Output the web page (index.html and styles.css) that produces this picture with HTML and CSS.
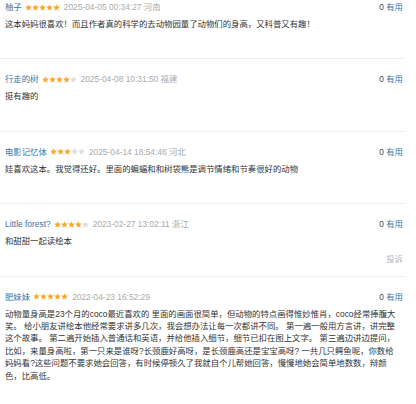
FILE: index.html
```html
<!DOCTYPE html>
<html lang="zh">
<head>
<meta charset="utf-8">
<link rel="stylesheet" href="styles.css">
</head>
<body>
<div class="list">
  <div class="item first">
    <div class="head">
      <span class="name">柚子</span>
      <svg class="stars" viewBox="0 0 35 7"><g class="on"><polygon points="3.5,0.2 4.5,2.5 6.9,2.6 5,4.2 5.7,6.7 3.5,5.3 1.3,6.7 2,4.2 0.1,2.6 2.5,2.5"/><polygon transform="translate(7 0)" points="3.5,0.2 4.5,2.5 6.9,2.6 5,4.2 5.7,6.7 3.5,5.3 1.3,6.7 2,4.2 0.1,2.6 2.5,2.5"/><polygon transform="translate(14 0)" points="3.5,0.2 4.5,2.5 6.9,2.6 5,4.2 5.7,6.7 3.5,5.3 1.3,6.7 2,4.2 0.1,2.6 2.5,2.5"/><polygon transform="translate(21 0)" points="3.5,0.2 4.5,2.5 6.9,2.6 5,4.2 5.7,6.7 3.5,5.3 1.3,6.7 2,4.2 0.1,2.6 2.5,2.5"/><polygon transform="translate(28 0)" points="3.5,0.2 4.5,2.5 6.9,2.6 5,4.2 5.7,6.7 3.5,5.3 1.3,6.7 2,4.2 0.1,2.6 2.5,2.5"/></g></svg>
      <span class="time">2025-04-05 00:34:27 河南</span>
      <span class="vote"><span class="count">0</span> <span class="useful">有用</span></span>
    </div>
    <p class="text">这本妈妈很喜欢！而且作者真的科学的去动物园量了动物们的身高，又科普又有趣！</p>
    <div class="actions"><span class="report hidden">投诉</span></div>
  </div>

  <div class="item">
    <div class="head">
      <span class="name">行走的树</span>
      <svg class="stars" viewBox="0 0 35 7"><g class="on"><polygon points="3.5,0.2 4.5,2.5 6.9,2.6 5,4.2 5.7,6.7 3.5,5.3 1.3,6.7 2,4.2 0.1,2.6 2.5,2.5"/><polygon transform="translate(7 0)" points="3.5,0.2 4.5,2.5 6.9,2.6 5,4.2 5.7,6.7 3.5,5.3 1.3,6.7 2,4.2 0.1,2.6 2.5,2.5"/><polygon transform="translate(14 0)" points="3.5,0.2 4.5,2.5 6.9,2.6 5,4.2 5.7,6.7 3.5,5.3 1.3,6.7 2,4.2 0.1,2.6 2.5,2.5"/><polygon transform="translate(21 0)" points="3.5,0.2 4.5,2.5 6.9,2.6 5,4.2 5.7,6.7 3.5,5.3 1.3,6.7 2,4.2 0.1,2.6 2.5,2.5"/></g><g class="off"><polygon transform="translate(28 0)" points="3.5,0.2 4.5,2.5 6.9,2.6 5,4.2 5.7,6.7 3.5,5.3 1.3,6.7 2,4.2 0.1,2.6 2.5,2.5"/></g></svg>
      <span class="time">2025-04-08 10:31:50 福建</span>
      <span class="vote"><span class="count">0</span> <span class="useful">有用</span></span>
    </div>
    <p class="text">挺有趣的</p>
    <div class="actions"><span class="report hidden">投诉</span></div>
  </div>

  <div class="item">
    <div class="head">
      <span class="name">电影记忆体</span>
      <svg class="stars" viewBox="0 0 35 7"><g class="on"><polygon points="3.5,0.2 4.5,2.5 6.9,2.6 5,4.2 5.7,6.7 3.5,5.3 1.3,6.7 2,4.2 0.1,2.6 2.5,2.5"/><polygon transform="translate(7 0)" points="3.5,0.2 4.5,2.5 6.9,2.6 5,4.2 5.7,6.7 3.5,5.3 1.3,6.7 2,4.2 0.1,2.6 2.5,2.5"/><polygon transform="translate(14 0)" points="3.5,0.2 4.5,2.5 6.9,2.6 5,4.2 5.7,6.7 3.5,5.3 1.3,6.7 2,4.2 0.1,2.6 2.5,2.5"/></g><g class="off"><polygon transform="translate(21 0)" points="3.5,0.2 4.5,2.5 6.9,2.6 5,4.2 5.7,6.7 3.5,5.3 1.3,6.7 2,4.2 0.1,2.6 2.5,2.5"/><polygon transform="translate(28 0)" points="3.5,0.2 4.5,2.5 6.9,2.6 5,4.2 5.7,6.7 3.5,5.3 1.3,6.7 2,4.2 0.1,2.6 2.5,2.5"/></g></svg>
      <span class="time">2025-04-14 18:54:46 河北</span>
      <span class="vote"><span class="count">0</span> <span class="useful">有用</span></span>
    </div>
    <p class="text">娃喜欢这本。我觉得还好。里面的蝙蝠和和树袋熊是调节情绪和节奏很好的动物</p>
    <div class="actions"><span class="report hidden">投诉</span></div>
  </div>

  <div class="item">
    <div class="head">
      <span class="name">Little forest?</span>
      <svg class="stars" viewBox="0 0 35 7"><g class="on"><polygon points="3.5,0.2 4.5,2.5 6.9,2.6 5,4.2 5.7,6.7 3.5,5.3 1.3,6.7 2,4.2 0.1,2.6 2.5,2.5"/><polygon transform="translate(7 0)" points="3.5,0.2 4.5,2.5 6.9,2.6 5,4.2 5.7,6.7 3.5,5.3 1.3,6.7 2,4.2 0.1,2.6 2.5,2.5"/><polygon transform="translate(14 0)" points="3.5,0.2 4.5,2.5 6.9,2.6 5,4.2 5.7,6.7 3.5,5.3 1.3,6.7 2,4.2 0.1,2.6 2.5,2.5"/><polygon transform="translate(21 0)" points="3.5,0.2 4.5,2.5 6.9,2.6 5,4.2 5.7,6.7 3.5,5.3 1.3,6.7 2,4.2 0.1,2.6 2.5,2.5"/></g><g class="off"><polygon transform="translate(28 0)" points="3.5,0.2 4.5,2.5 6.9,2.6 5,4.2 5.7,6.7 3.5,5.3 1.3,6.7 2,4.2 0.1,2.6 2.5,2.5"/></g></svg>
      <span class="time">2023-02-27 13:02:11 浙江</span>
      <span class="vote"><span class="count">0</span> <span class="useful">有用</span></span>
    </div>
    <p class="text">和甜甜一起读绘本</p>
    <div class="actions"><span class="report">投诉</span></div>
  </div>

  <div class="item">
    <div class="head">
      <span class="name">肥妹妹</span>
      <svg class="stars" viewBox="0 0 35 7"><g class="on"><polygon points="3.5,0.2 4.5,2.5 6.9,2.6 5,4.2 5.7,6.7 3.5,5.3 1.3,6.7 2,4.2 0.1,2.6 2.5,2.5"/><polygon transform="translate(7 0)" points="3.5,0.2 4.5,2.5 6.9,2.6 5,4.2 5.7,6.7 3.5,5.3 1.3,6.7 2,4.2 0.1,2.6 2.5,2.5"/><polygon transform="translate(14 0)" points="3.5,0.2 4.5,2.5 6.9,2.6 5,4.2 5.7,6.7 3.5,5.3 1.3,6.7 2,4.2 0.1,2.6 2.5,2.5"/><polygon transform="translate(21 0)" points="3.5,0.2 4.5,2.5 6.9,2.6 5,4.2 5.7,6.7 3.5,5.3 1.3,6.7 2,4.2 0.1,2.6 2.5,2.5"/><polygon transform="translate(28 0)" points="3.5,0.2 4.5,2.5 6.9,2.6 5,4.2 5.7,6.7 3.5,5.3 1.3,6.7 2,4.2 0.1,2.6 2.5,2.5"/></g></svg>
      <span class="time">2022-04-23 16:52:29</span>
      <span class="vote"><span class="count">0</span> <span class="useful">有用</span></span>
    </div>
    <p class="text">动物量身高是23个月的coco最近喜欢的 里面的画面很简单，但动物的特点画得惟妙惟肖，coco经常捧腹大笑。 给小朋友讲绘本他经常要求讲多几次，我会想办法让每一次都讲不同。 第一遍一般用方言讲，讲完整这个故事。 第二遍开始插入普通话和英语，并给他插入细节，细节已扣在图上文字。 第三遍边讲边提问，比如，来量身高啦，第一只来是谁呀?长颈鹿好高呀，是长颈鹿高还是宝宝高呀? 一共几只鳄鱼呢，你数给<span class="keep">妈妈看</span>?这些问题不要求她会回答，有时候停顿久了我就自个儿帮她回答，慢慢地她会简单地数数，辩颜色，比高低。</p>
    <div class="actions"><span class="report hidden">投诉</span></div>
  </div>
</div>
</body>
</html>
```

FILE: styles.css
```css
html, body {
  margin: 0;
  padding: 0;
  background: #fff;
}

body {
  font-family: "Liberation Sans", "Noto Sans CJK SC", sans-serif;
  font-size: 8.4px;
  color: #333;
}

.list {
  width: 404px;
}

.item {
  padding: 14px 1px 11px 5px;
  border-bottom: 1px solid #eeeeee;
}

.item.first {
  padding-top: 1px;
}

.head {
  display: flex;
  align-items: center;
  height: 12px;
  line-height: 12px;
  white-space: nowrap;
}

.name {
  color: #3377aa;
}

.stars {
  width: 35px;
  height: 7px;
  margin-left: 3px;
  flex: none;
}

.stars .on {
  fill: #f7a829;
}

.stars .off {
  fill: #dddddd;
}

.time {
  color: #aaaaaa;
  margin-left: 4px;
}

.vote {
  margin-left: auto;
}

.count {
  color: #494949;
}

.useful {
  color: #3377aa;
}

.text {
  margin: 5px 0 0 0;
  line-height: 12.4px;
  color: #333;
}

.keep {
  white-space: nowrap;
}

.actions {
  margin-top: 5px;
  height: 12px;
  line-height: 12px;
  text-align: right;
}

.report {
  color: #b5b5b5;
}

.report.hidden {
  visibility: hidden;
}
```
